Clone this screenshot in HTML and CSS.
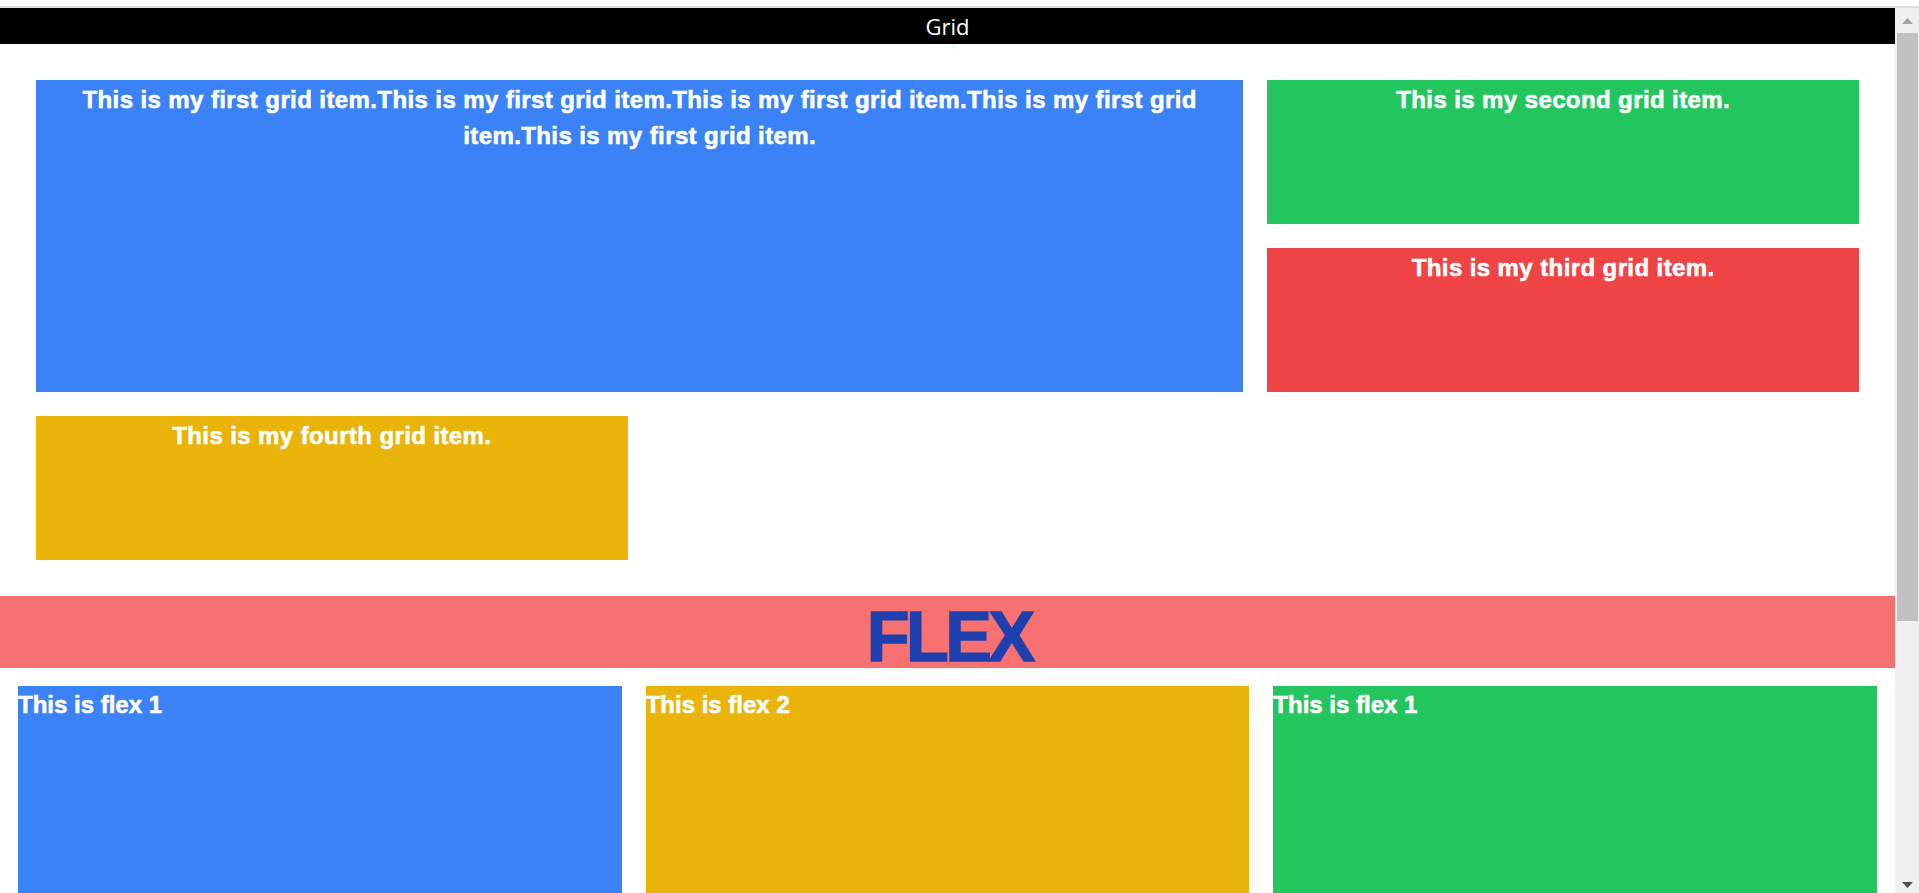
FILE: index.html
```html
<!DOCTYPE html>
<html lang="en">
<head>
<meta charset="utf-8">
<title>Grid and Flex</title>
<link rel="stylesheet" href="styles.css">
</head>
<body>
  <div class="topstrip"></div>
  <div class="window">
    <main class="page">
      <header class="bar">Grid</header>
      <section class="grid">
        <div class="cell cell-wide bg-blue">This is my first grid item.This is my first grid item.This is my first grid item.This is my first grid item.This is my first grid item.</div>
        <div class="cell bg-green">This is my second grid item.</div>
        <div class="cell bg-red">This is my third grid item.</div>
        <div class="cell bg-yellow">This is my fourth grid item.</div>
      </section>
      <h1 class="flex-title">FLEX</h1>
      <section class="flexrow">
        <div class="fitem bg-blue">This is flex 1</div>
        <div class="fitem bg-yellow">This is flex 2</div>
        <div class="fitem bg-green">This is flex 1</div>
      </section>
    </main>
    <div class="scrollbar">
      <div class="sb-btn sb-up">
        <svg width="11" height="6" viewBox="0 0 11 6"><polygon points="0,6 11,6 5.5,0" fill="#a3a3a3"/></svg>
      </div>
      <div class="sb-thumb"></div>
      <div class="sb-space"></div>
      <div class="sb-btn sb-down">
        <svg width="11" height="6" viewBox="0 0 11 6"><polygon points="0,0 11,0 5.5,6" fill="#505050"/></svg>
      </div>
    </div>
  </div>
</body>
</html>
```

FILE: styles.css
```css
* {
  box-sizing: border-box;
}

html, body {
  margin: 0;
  padding: 0;
  height: 893px;
  overflow: hidden;
  background: #ffffff;
}

body {
  display: flex;
  flex-direction: column;
  font-family: "Liberation Sans", Arial, sans-serif;
}

.topstrip {
  height: 8px;
  flex: none;
  background: #ffffff;
  border-bottom: 2px solid #dedede;
}

.window {
  display: flex;
  height: 885px;
  flex: none;
}

.page {
  flex: 1;
  min-width: 0;
  overflow: hidden;
  background: #ffffff;
}

.bar {
  height: 36px;
  background: #000000;
  color: #ffffff;
  text-align: center;
  font-family: "Open Sans", "Noto Sans", sans-serif;
  font-size: 22px;
  line-height: 37px;
  overflow: hidden;
}

.grid {
  padding: 36px;
  display: grid;
  grid-template-columns: repeat(3, 1fr);
  grid-auto-rows: 144px;
  gap: 24px;
}

.cell {
  color: #ffffff;
  font-weight: 700;
  font-size: 24px;
  line-height: 36px;
  letter-spacing: 0.4px;
  text-align: center;
  padding-top: 2px;
  -webkit-text-stroke: 0.6px #ffffff;
}

.cell-wide {
  grid-column: span 2;
  grid-row: span 2;
}

.bg-blue { background: #3b82f6; }
.bg-green { background: #22c55e; }
.bg-red { background: #ef4444; }
.bg-yellow { background: #eab308; }

.flex-title {
  margin: 0;
  height: 72px;
  background: #f87171;
  color: #1e40af;
  text-align: center;
  font-family: "Liberation Sans", Arial, sans-serif;
  font-weight: 700;
  font-size: 70px;
  line-height: 61px;
  padding-top: 11px;
  letter-spacing: -3.5px;
  text-indent: 3.5px;
  -webkit-text-stroke: 1.5px #1e40af;
}

.flexrow {
  display: flex;
  gap: 24px;
  padding: 18px;
}

.fitem {
  flex: 1;
  height: 400px;
  color: #ffffff;
  font-weight: 700;
  font-size: 24px;
  line-height: 36px;
  padding-top: 1px;
  -webkit-text-stroke: 0.6px #ffffff;
}

.scrollbar {
  width: 24px;
  flex: none;
  background: #f0f0f0;
  display: flex;
  flex-direction: column;
}

.sb-btn {
  height: 25px;
  flex: none;
  display: flex;
  justify-content: center;
  padding-left: 1px;
}

.sb-btn svg {
  display: block;
}

.sb-up {
  align-items: center;
  padding-top: 1px;
}

.sb-down {
  align-items: flex-end;
  padding-bottom: 5px;
}

.sb-thumb {
  height: 588px;
  flex: none;
  margin-left: 2px;
  margin-right: 1px;
  background: #c1c1c1;
}

.sb-space {
  flex: 1;
}
```
